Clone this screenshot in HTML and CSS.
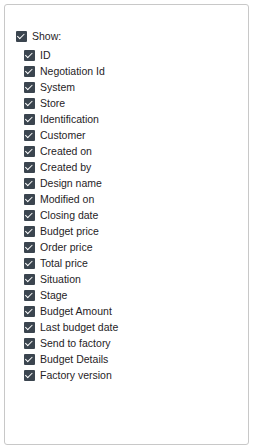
FILE: index.html
```html
<!doctype html>
<html lang="en">
  <head>
    <meta charset="UTF-8" />
    <meta name="viewport" content="width=device-width, initial-scale=1.0" />
    <title>Columns</title>
    <link rel="stylesheet" href="styles.css">
  </head>
  <body>
    <main class="panel">
      <label class="check-row show-row">
        <input type="checkbox" checked />
        <span>Show:</span>
      </label>

      <ul class="column-list">
        <li><label class="check-row"><input type="checkbox" checked /><span>ID</span></label></li>
        <li><label class="check-row"><input type="checkbox" checked /><span>Negotiation Id</span></label></li>
        <li><label class="check-row"><input type="checkbox" checked /><span>System</span></label></li>
        <li><label class="check-row"><input type="checkbox" checked /><span>Store</span></label></li>
        <li><label class="check-row"><input type="checkbox" checked /><span>Identification</span></label></li>
        <li><label class="check-row"><input type="checkbox" checked /><span>Customer</span></label></li>
        <li><label class="check-row"><input type="checkbox" checked /><span>Created on</span></label></li>
        <li><label class="check-row"><input type="checkbox" checked /><span>Created by</span></label></li>
        <li><label class="check-row"><input type="checkbox" checked /><span>Design name</span></label></li>
        <li><label class="check-row"><input type="checkbox" checked /><span>Modified on</span></label></li>
        <li><label class="check-row"><input type="checkbox" checked /><span>Closing date</span></label></li>
        <li><label class="check-row"><input type="checkbox" checked /><span>Budget price</span></label></li>
        <li><label class="check-row"><input type="checkbox" checked /><span>Order price</span></label></li>
        <li><label class="check-row"><input type="checkbox" checked /><span>Total price</span></label></li>
        <li><label class="check-row"><input type="checkbox" checked /><span>Situation</span></label></li>
        <li><label class="check-row"><input type="checkbox" checked /><span>Stage</span></label></li>
        <li><label class="check-row"><input type="checkbox" checked /><span>Budget Amount</span></label></li>
        <li><label class="check-row"><input type="checkbox" checked /><span>Last budget date</span></label></li>
        <li><label class="check-row"><input type="checkbox" checked /><span>Send to factory</span></label></li>
        <li><label class="check-row"><input type="checkbox" checked /><span>Budget Details</span></label></li>
        <li><label class="check-row"><input type="checkbox" checked /><span>Factory version</span></label></li>
      </ul>
    </main>
  </body>
</html>
```

FILE: styles.css
```css
* {
  margin: 0;
  padding: 0;
  box-sizing: border-box;
}

body {
  font-family: "Liberation Sans", Arial, sans-serif;
  font-size: 10.5px;
  color: #1f2326;
  background-color: #fff;
  padding: 4px 9px 3px 4px;
  height: 100vh;
}

.panel {
  border: 1px solid #c8c8c8;
  border-radius: 3px;
  height: 100%;
  padding: 23px 11px 0;
}

.check-row {
  display: flex;
  align-items: center;
  gap: 5px;
  height: 16px;
  cursor: pointer;
}

.check-row input {
  appearance: none;
  -webkit-appearance: none;
  position: relative;
  flex: none;
  width: 11px;
  height: 11px;
  margin: 0;
  border-radius: 1px;
  background-color: #3b454f;
  cursor: pointer;
}

/* white tick */
.check-row input:checked::after {
  content: "";
  position: absolute;
  left: 3px;
  top: 1.5px;
  width: 3px;
  height: 5.5px;
  border: solid #fff;
  border-width: 0 1px 1px 0;
  transform: rotate(45deg);
}

.show-row {
  margin-bottom: 3px;
}

.column-list {
  list-style: none;
  padding-left: 8px;
}
```
